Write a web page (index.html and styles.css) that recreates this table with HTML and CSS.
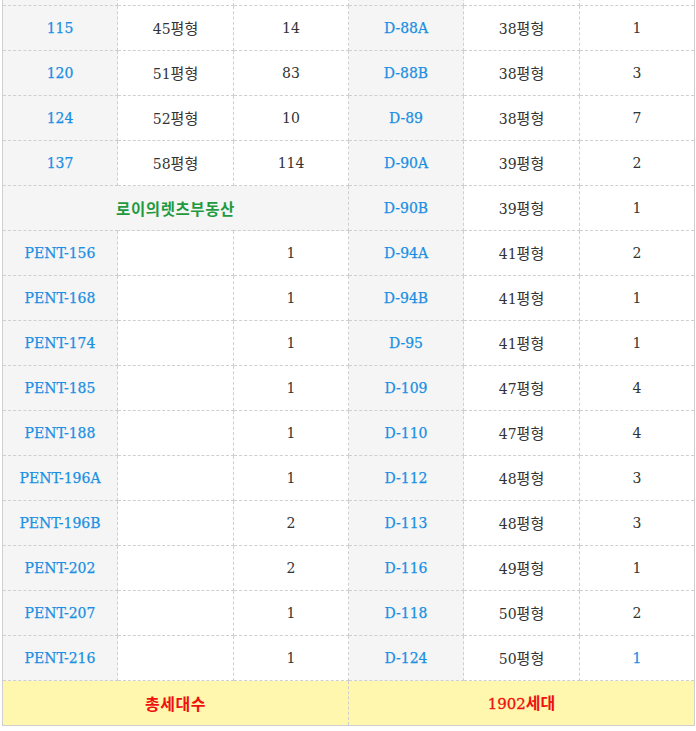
FILE: index.html
```html
<!DOCTYPE html>
<html lang="ko">
<head>
<meta charset="utf-8">
<link rel="stylesheet" href="styles.css">
</head>
<body>
<table class="units">
  <colgroup>
    <col class="c1"><col class="c2"><col class="c3"><col class="c4"><col class="c5"><col class="c6">
  </colgroup>
  <tbody>
    <tr class="prev"><td class="key"></td><td></td><td></td><td class="key"></td><td></td><td></td></tr>
    <tr><td class="key">115</td><td>45<span class="ko">평형</span></td><td>14</td><td class="key">D-88A</td><td>38<span class="ko">평형</span></td><td>1</td></tr>
    <tr><td class="key">120</td><td>51<span class="ko">평형</span></td><td>83</td><td class="key">D-88B</td><td>38<span class="ko">평형</span></td><td>3</td></tr>
    <tr><td class="key">124</td><td>52<span class="ko">평형</span></td><td>10</td><td class="key">D-89</td><td>38<span class="ko">평형</span></td><td>7</td></tr>
    <tr><td class="key">137</td><td>58<span class="ko">평형</span></td><td>114</td><td class="key">D-90A</td><td>39<span class="ko">평형</span></td><td>2</td></tr>
    <tr><td class="brand" colspan="3">로이의렛츠부동산</td><td class="key">D-90B</td><td>39<span class="ko">평형</span></td><td>1</td></tr>
    <tr><td class="key">PENT-156</td><td></td><td>1</td><td class="key">D-94A</td><td>41<span class="ko">평형</span></td><td>2</td></tr>
    <tr><td class="key">PENT-168</td><td></td><td>1</td><td class="key">D-94B</td><td>41<span class="ko">평형</span></td><td>1</td></tr>
    <tr><td class="key">PENT-174</td><td></td><td>1</td><td class="key">D-95</td><td>41<span class="ko">평형</span></td><td>1</td></tr>
    <tr><td class="key">PENT-185</td><td></td><td>1</td><td class="key">D-109</td><td>47<span class="ko">평형</span></td><td>4</td></tr>
    <tr><td class="key">PENT-188</td><td></td><td>1</td><td class="key">D-110</td><td>47<span class="ko">평형</span></td><td>4</td></tr>
    <tr><td class="key">PENT-196A</td><td></td><td>1</td><td class="key">D-112</td><td>48<span class="ko">평형</span></td><td>3</td></tr>
    <tr><td class="key">PENT-196B</td><td></td><td>2</td><td class="key">D-113</td><td>48<span class="ko">평형</span></td><td>3</td></tr>
    <tr><td class="key">PENT-202</td><td></td><td>2</td><td class="key">D-116</td><td>49<span class="ko">평형</span></td><td>1</td></tr>
    <tr><td class="key">PENT-207</td><td></td><td>1</td><td class="key">D-118</td><td>50<span class="ko">평형</span></td><td>2</td></tr>
    <tr><td class="key">PENT-216</td><td></td><td>1</td><td class="key">D-124</td><td>50<span class="ko">평형</span></td><td class="blue">1</td></tr>
    <tr class="total"><td colspan="3">총세대수</td><td colspan="3">1902<span class="ko">세대</span></td></tr>
  </tbody>
</table>
</body>
</html>
```

FILE: styles.css
```css
html, body {
  margin: 0;
  padding: 0;
  background: #fff;
}

body {
  font-family: "DejaVu Serif", "Noto Sans CJK KR", serif;
  font-size: 14px;
  color: #333;
}

.units {
  border-collapse: collapse;
  table-layout: fixed;
  width: 693px;
  margin: -40px 0 0 2px;
  border: 1px solid #cfcfcf;
}

.c1, .c3, .c4, .c6 { width: 115px; }
.c2, .c5 { width: 116px; }

.units td {
  height: 44px;
  padding: 0;
  border: 1px dashed #cfcfcf;
  text-align: center;
  vertical-align: middle;
  line-height: 20px;
}

.ko {
  font-family: "Noto Sans CJK KR", sans-serif;
  font-size: 15px;
}

.units td.key {
  background: #f5f5f5;
  color: #1a8fe3;
  font-weight: 500;
  -webkit-text-stroke: 0.25px #1a8fe3;
}

.units td.blue {
  color: #1a8fe3;
  -webkit-text-stroke: 0.25px #1a8fe3;
}

.units td.brand {
  background: #f5f5f5;
  color: #1f9a3f;
  font-family: "Noto Sans CJK KR", sans-serif;
  font-size: 15.5px;
  font-weight: 700;
  letter-spacing: 0.6px;
}

.units tr.total td {
  background: #fff7ad;
  color: #f01010;
  font-size: 15px;
  -webkit-text-stroke: 0.3px #f01010;
}

.units tr.total td .ko {
  font-size: 16px;
  font-weight: 700;
  -webkit-text-stroke: 0;
}

.units tr.total td:first-child {
  font-family: "Noto Sans CJK KR", sans-serif;
  font-size: 16px;
  font-weight: 700;
  letter-spacing: 0.5px;
  -webkit-text-stroke: 0;
}
```
